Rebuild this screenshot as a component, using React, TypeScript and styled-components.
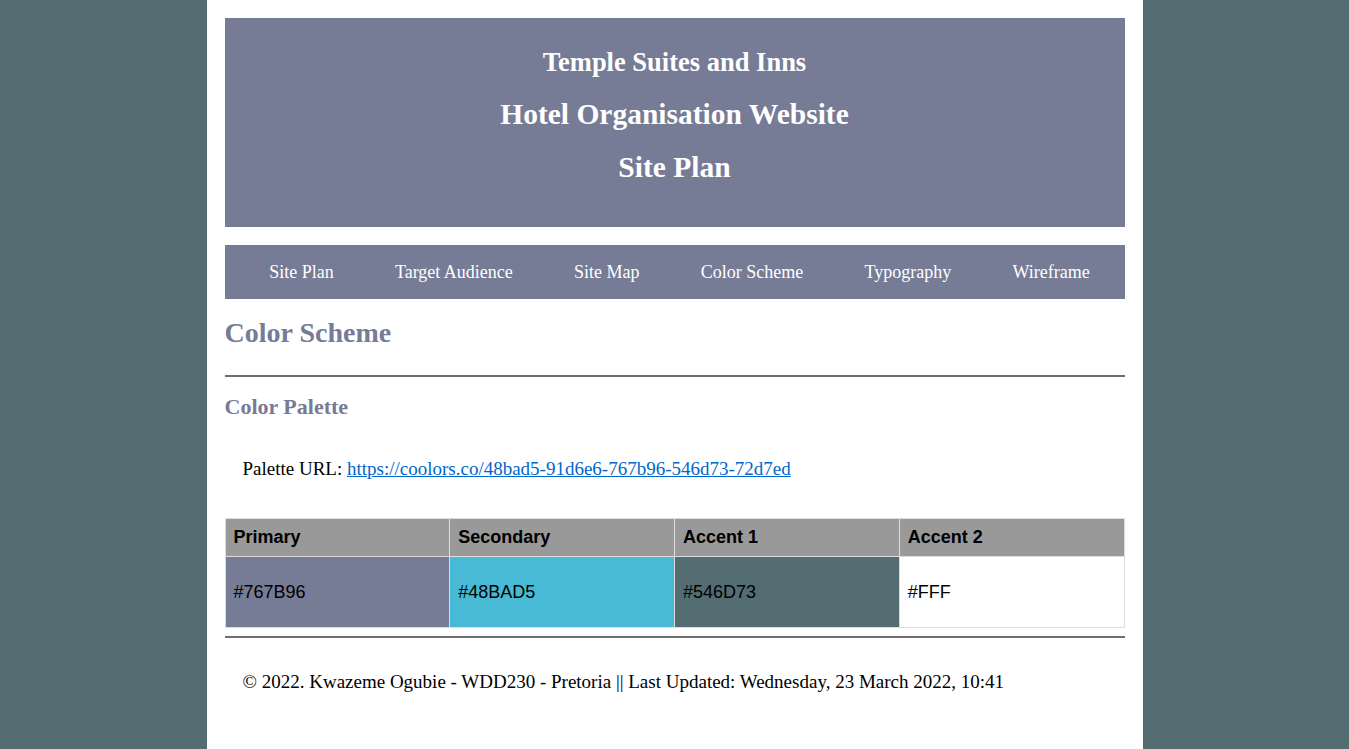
import React from "react";
import styled, { createGlobalStyle } from "styled-components";

const GlobalStyle = createGlobalStyle`
  html, body {
    margin: 0;
    padding: 0;
    background-color: #546d73;
  }
  * {
    box-sizing: border-box;
  }
`;

const navItems = ["Site Plan", "Target Audience", "Site Map", "Color Scheme", "Typography", "Wireframe"];

const palette = [
  { name: "Primary", value: "#767B96", bg: "#767b96" },
  { name: "Secondary", value: "#48BAD5", bg: "#48bad5" },
  { name: "Accent 1", value: "#546D73", bg: "#546d73" },
  { name: "Accent 2", value: "#FFF", bg: "#ffffff" },
];

export default function App() {
  return (
    <>
      <GlobalStyle />
      <Page>
        <Header>
          <SiteName>Temple Suites and Inns</SiteName>
          <HeaderLine>Hotel Organisation Website</HeaderLine>
          <HeaderLine>Site Plan</HeaderLine>
        </Header>
        <Nav>
          {navItems.map((item) => (
            <NavLink key={item} href="#">
              {item}
            </NavLink>
          ))}
        </Nav>
        <main>
          <Title>Color Scheme</Title>
          <Rule />
          <SubTitle>Color Palette</SubTitle>
          <Para>
            Palette URL:{" "}
            <Link href="#">https://coolors.co/48bad5-91d6e6-767b96-546d73-72d7ed</Link>
          </Para>
          <Table>
            <thead>
              <tr>
                {palette.map((p) => (
                  <Th key={p.name}>{p.name}</Th>
                ))}
              </tr>
            </thead>
            <tbody>
              <tr>
                {palette.map((p) => (
                  <Td key={p.name} $bg={p.bg}>
                    {p.value}
                  </Td>
                ))}
              </tr>
            </tbody>
          </Table>
          <Rule $tight />
        </main>
        <Footer>
          © 2022. Kwazeme Ogubie - WDD230 - Pretoria || Last Updated: Wednesday, 23 March 2022, 10:41
        </Footer>
      </Page>
    </>
  );
}

const Page = styled.div`
  width: 936px;
  min-height: 100vh;
  margin: 0 auto;
  padding: 18px;
  background-color: #fff;
  font-family: "Liberation Serif", "Times New Roman", serif;
`;

const Header = styled.header`
  height: 209px;
  padding-top: 18px;
  background-color: #767b96;
  color: #fff;
  text-align: center;
  font-weight: bold;
`;

const SiteName = styled.div`
  font-size: 26.5px;
  line-height: 52px;
`;

const HeaderLine = styled.div`
  font-size: 29.5px;
  line-height: 53px;
`;

const Nav = styled.nav`
  display: flex;
  justify-content: space-around;
  align-items: center;
  height: 54px;
  margin-top: 18px;
  padding: 0 4px 0 14px;
  background-color: #767b96;
`;

const NavLink = styled.a`
  color: #fff;
  text-decoration: none;
  font-size: 18px;
`;

const Title = styled.h2`
  margin: 17px 0 0;
  font-size: 28px;
  line-height: 34px;
  color: #767b96;
`;

const Rule = styled.hr<{ $tight?: boolean }>`
  margin: ${(p) => (p.$tight ? "8px 0 0" : "25px 0 0")};
  height: 2px;
  border: none;
  background-color: #6e6e6e;
`;

const SubTitle = styled.h3`
  margin: 17px 0 0;
  font-size: 22px;
  line-height: 26px;
  color: #767b96;
`;

const Para = styled.p`
  margin: 38px 0 0;
  padding-left: 18px;
  font-size: 19px;
  line-height: 22px;
  color: #000;
`;

const Link = styled.a`
  color: #0066cc;
`;

const Table = styled.table`
  width: 100%;
  margin-top: 38px;
  border-collapse: collapse;
  table-layout: fixed;
  font-family: "Liberation Sans", Arial, sans-serif;
  font-size: 18px;
`;

const Th = styled.th`
  height: 38px;
  padding: 0 8px;
  text-align: left;
  background-color: #999;
  border: 1px solid #ddd;
  color: #000;
`;

const Td = styled.td<{ $bg: string }>`
  height: 71px;
  padding: 0 8px;
  background-color: ${(p) => p.$bg};
  border: 1px solid #ddd;
  color: #000;
`;

const Footer = styled.footer`
  margin-top: 33px;
  padding-left: 18px;
  font-size: 19px;
  line-height: 22px;
  color: #000;
`;
